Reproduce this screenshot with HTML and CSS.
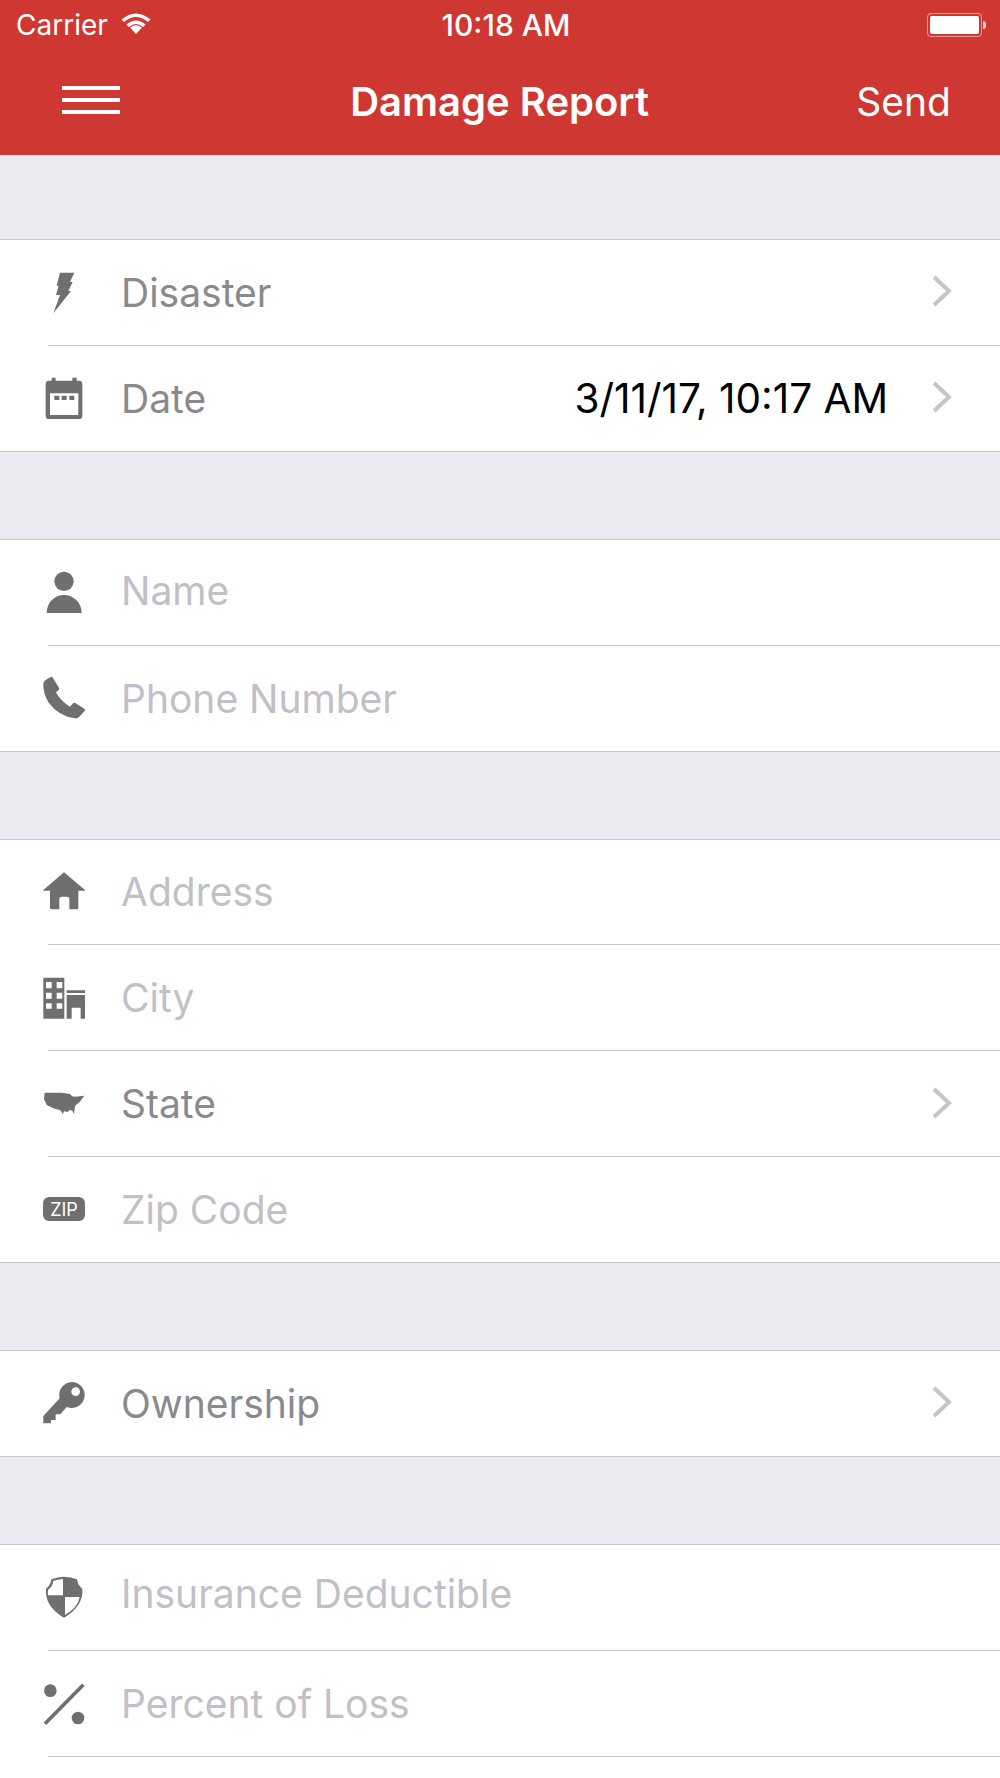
FILE: index.html
```html
<!DOCTYPE html>
<html lang="en">
<head>
  <meta charset="UTF-8">
  <meta name="viewport" content="width=device-width, initial-scale=1">
  <title>Damage Report</title>
  <link rel="stylesheet" href="styles.css">
</head>
<body>
  <div class="screen">
    <!-- Status bar + nav -->
    <header class="top">
      <div class="status">
        <div class="status-left">
          <span>Carrier</span>
          <svg class="wifi" viewBox="0 0 30 22"><path d="M15 22L9 15.5Q15 11 21 15.5Z"/><path d="M5.5 12.5Q15 4.5 24.5 12.5L22 15Q15 9 8 15Z"/><path d="M0.5 7.5Q15 -4.5 29.5 7.5L27 10Q15 0 3 10Z"/></svg>
        </div>
        <span class="status-time">10:18 AM</span>
        <div class="status-right">
          <span class="battery"><span class="battery-fill"></span></span>
          <span class="battery-tip"></span>
        </div>
      </div>
      <nav class="nav">
        <div class="menu"><span></span><span></span><span></span></div>
        <h1 class="nav-title">Damage Report</h1>
        <span class="nav-send">Send</span>
      </nav>
    </header>

    <section class="group">
      <div class="row">
        <svg class="icon" viewBox="0 0 132 132"><path d="M54 5H97L84 33H92L79 60H87L34 127L54 72H42L50 44H44Z"/></svg>
        <div class="row-body">
          <span class="label">Disaster</span>
          <svg class="chevron" viewBox="0 0 20 32"><path d="M2 2L17 16L2 30"/></svg>
        </div>
      </div>
      <div class="row">
        <svg class="icon" viewBox="0 0 132 132"><path fill-rule="evenodd" d="M29 5H41V14H91V5H104V14H111Q121 14 121 24V119Q121 129 111 129H21Q11 129 11 119V24Q11 14 21 14H29ZM24 52V117H109V52ZM37 59H52V72H37ZM59 59H74V72H59ZM82 59H97V72H82Z"/></svg>
        <div class="row-body">
          <span class="label">Date</span>
          <span class="value">3/11/17, 10:17 AM</span>
          <svg class="chevron" viewBox="0 0 20 32"><path d="M2 2L17 16L2 30"/></svg>
        </div>
      </div>
    </section>

    <section class="group">
      <div class="row">
        <svg class="icon" viewBox="0 0 132 132"><circle cx="66" cy="31" r="29"/><path d="M14 126C14 94 38 72 66 72S119 94 119 126Z"/></svg>
        <div class="row-body"><span class="label placeholder label-high">Name</span></div>
      </div>
      <div class="row">
        <svg class="icon" viewBox="0 0 132 132"><path d="M31 3L51 35Q53 39 50 42L42 49Q55 75 84 92L93 82Q96 79 100 81L127 98Q131 101 128 105L112 122Q106 128 99 127Q50 120 20 80Q2 50 4 22Q6 14 14 10L26 3Q29 1 31 3Z"/></svg>
        <div class="row-body"><span class="label placeholder">Phone Number</span></div>
      </div>
    </section>

    <section class="group">
      <div class="row">
        <svg class="icon" viewBox="0 0 132 132"><path d="M66 7L129 60Q129 62 127 62H109V113Q109 118 104 118H82V88Q82 80 74 80H60Q52 80 52 88V118H29Q24 118 24 113V62H6Q3 62 4 60Z"/></svg>
        <div class="row-body"><span class="label placeholder">Address</span></div>
      </div>
      <div class="row">
        <svg class="icon" viewBox="0 0 132 132"><path fill-rule="evenodd" d="M4 5H67V128H4ZM12 18V37H29V18ZM44 18V37H61V18ZM12 50V68H29V50ZM44 50V68H61V50ZM12 82V98H29V82ZM44 82V98H61V82ZM74 43H129V51H74ZM74 57H129V128H116V95H89V128H74Z"/></svg>
        <div class="row-body"><span class="label placeholder">City</span></div>
      </div>
      <div class="row">
        <svg class="icon" viewBox="0 0 132 132"><path d="M8 32L59 32L84 36L90 43L99 44L127 41L120 50L114 59L103 68L99 72L96 96L91 86L84 84L76 90L66 88L63 96L55 85L34 79L14 69L6 52Z"/></svg>
        <div class="row-body">
          <span class="label">State</span>
          <svg class="chevron" viewBox="0 0 20 32"><path d="M2 2L17 16L2 30"/></svg>
        </div>
      </div>
      <div class="row">
        <span class="zip">ZIP</span>
        <div class="row-body"><span class="label placeholder">Zip Code</span></div>
      </div>
    </section>

    <section class="group">
      <div class="row">
        <svg class="icon" viewBox="0 0 132 132"><path fill-rule="evenodd" d="M89 3A39 39 0 1 1 74 78L55 100H41V117H27V127H4V105L53 52A39 39 0 0 1 89 3ZM101 19A13 13 0 1 0 101 45A13 13 0 1 0 101 19Z"/></svg>
        <div class="row-body">
          <span class="label">Ownership</span>
          <svg class="chevron" viewBox="0 0 20 32"><path d="M2 2L17 16L2 30"/></svg>
        </div>
      </div>
    </section>

    <section class="group group-last">
      <div class="row">
        <svg class="icon" viewBox="0 0 132 132"><path d="M66 2Q85 2 105 10Q108 30 121 38Q125 90 66 125Q7 90 12 38Q25 30 28 10Q47 2 66 2Z"/><path class="icon-cut" d="M63 9V58H18Q17 50 18 42Q31 34 34 15Q47 10 63 9ZM69 63H113Q108 95 69 117Z"/></svg>
        <div class="row-body"><span class="label placeholder label-higher">Insurance Deductible</span></div>
      </div>
      <div class="row">
        <svg class="icon" viewBox="0 0 132 132"><circle cx="25" cy="26" r="19"/><circle cx="108" cy="108" r="19"/><path class="icon-line" d="M9 125L124 8"/></svg>
        <div class="row-body"><span class="label placeholder">Percent of Loss</span></div>
      </div>
    </section>
  </div>
</body>
</html>
```

FILE: styles.css
```css
/* General Page Styling */
* {
  box-sizing: border-box;
}
body {
  margin: 0;
  font-family: Inter, "Liberation Sans", sans-serif;
  background-color: #ebebf1;
}
.screen {
  display: flex;
  flex-direction: column;
  height: 1778px;
  overflow: hidden;
}

/* Red header */
.top {
  height: 155px;
  background-color: #cf3733;
  color: #fff;
}
.status {
  display: flex;
  align-items: center;
  justify-content: space-between;
  height: 50px;
  padding: 0 14px 0 16px;
  font-size: 28px;
}
.status-left {
  display: flex;
  align-items: center;
  gap: 13px;
  width: 300px;
}
.wifi {
  width: 30px;
  height: 22px;
  margin-top: -4px;
  fill: #fff;
}
.status-time {
  font-size: 30px;
  font-weight: 500;
  margin-left: 10px;
}
.status-right {
  display: flex;
  align-items: center;
  justify-content: flex-end;
  width: 300px;
  padding-bottom: 1px;
}
.battery {
  width: 55px;
  height: 24px;
  padding: 2px;
  border: 1px solid #ea9c99;
  border-radius: 4px;
}
.battery-fill {
  display: block;
  height: 100%;
  background-color: #fff;
  border-radius: 2px;
}
.battery-tip {
  width: 3px;
  height: 8px;
  margin: 0 0 0 1px;
  background-color: #f4d2d0;
  border-radius: 0 3px 3px 0;
}
.nav {
  display: flex;
  align-items: center;
  justify-content: space-between;
  height: 105px;
  padding: 0 49px 2px 62px;
}
.menu {
  display: flex;
  flex-direction: column;
  gap: 8px;
  width: 58px;
  margin-bottom: 3px;
}
.menu span {
  height: 4px;
  background-color: #fff;
}
.nav-title {
  margin: 0 0 0 23px;
  font-size: 40px;
  font-weight: 600;
}
.nav-send {
  font-size: 39px;
  font-weight: 400;
}

/* Table groups */
.group {
  margin-top: 87px;
  background-color: #fff;
  border-top: 1px solid #c8c7cc;
  border-bottom: 1px solid #c8c7cc;
}
.top + .group {
  margin-top: 84px;
}
.group-last {
  flex: 1;
  border-bottom: none;
}
.row {
  display: flex;
  align-items: center;
  height: 105.8px;
  padding-left: 48px;
}
.row:last-child {
  height: 105px;
}
.group-last .row:last-child {
  height: 105.8px;
}
.row-body {
  display: flex;
  align-items: center;
  flex: 1;
  height: 100%;
  padding: 0 48px 0 73px;
  border-bottom: 1px solid #c8c7cc;
}
.group .row:last-child .row-body {
  border-bottom: none;
}
.group-last .row:last-child .row-body {
  border-bottom: 1px solid #c8c7cc;
}
.icon {
  width: 44px;
  height: 44px;
  margin-left: -6px;
  margin-right: -38px;
  flex-shrink: 0;
  fill: #6f6f6f;
}
.icon-cut {
  fill: #fff;
}
.icon-line {
  fill: none;
  stroke: #6f6f6f;
  stroke-width: 11;
}
.label {
  font-size: 39px;
  color: #8a8a8e;
}
.placeholder {
  color: #c0c0c6;
}
.label-high {
  margin-bottom: 4px;
}
.label-higher {
  margin-bottom: 7px;
}
.value {
  margin-left: auto;
  font-size: 40.5px;
  color: #000;
}
.chevron {
  width: 20px;
  height: 32px;
  margin-left: auto;
  margin-bottom: 2px;
  fill: none;
  stroke: #c4c4c9;
  stroke-width: 4;
}
.value + .chevron {
  margin-left: 44px;
}
.zip {
  display: flex;
  align-items: center;
  justify-content: center;
  width: 42px;
  height: 24px;
  margin-left: -5px;
  margin-right: -37px;
  flex-shrink: 0;
  font-size: 18px;
  color: #fff;
  background-color: #6f6f6f;
  border-radius: 6px;
}
```
